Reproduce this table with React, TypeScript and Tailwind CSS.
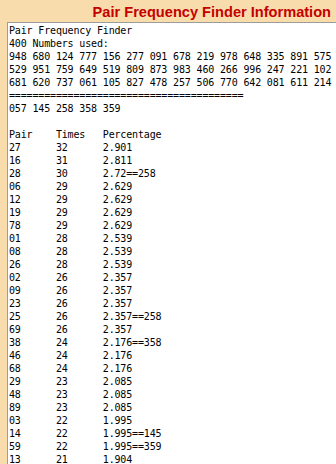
import React from 'react';

const rows: [string, string, string][] = [
  ['27', '32', '2.901'],
  ['16', '31', '2.811'],
  ['28', '30', '2.72==258'],
  ['06', '29', '2.629'],
  ['12', '29', '2.629'],
  ['19', '29', '2.629'],
  ['78', '29', '2.629'],
  ['01', '28', '2.539'],
  ['08', '28', '2.539'],
  ['26', '28', '2.539'],
  ['02', '26', '2.357'],
  ['09', '26', '2.357'],
  ['23', '26', '2.357'],
  ['25', '26', '2.357==258'],
  ['69', '26', '2.357'],
  ['38', '24', '2.176==358'],
  ['46', '24', '2.176'],
  ['68', '24', '2.176'],
  ['29', '23', '2.085'],
  ['48', '23', '2.085'],
  ['89', '23', '2.085'],
  ['03', '22', '1.995'],
  ['14', '22', '1.995==145'],
  ['59', '22', '1.995==359'],
  ['13', '21', '1.904'],
];

const pad = (s: string) => s.padEnd(8, ' ');

const text = [
  'Pair Frequency Finder',
  '400 Numbers used:',
  '948 680 124 777 156 277 091 678 219 978 648 335 891 575',
  '529 951 759 649 519 809 873 983 460 266 996 247 221 102',
  '681 620 737 061 105 827 478 257 506 770 642 081 611 214',
  '='.repeat(40),
  '057 145 258 358 359',
  '',
  pad('Pair') + pad('Times') + 'Percentage',
  ...rows.map(([p, t, pc]) => pad(p) + pad(t) + pc),
].join('\n');

export default function App() {
  return (
    <div className="w-[336px] h-[464px] overflow-hidden bg-[#f9dcab] flex flex-col">
      <div className="h-[22px] shrink-0 text-right pr-[5px]">
        <h1
          className="text-[14.6px] font-bold text-[#c40000] leading-[24px] whitespace-nowrap"
          style={{ fontFamily: '"Liberation Sans", Arial, sans-serif' }}
        >
          Pair Frequency Finder Information
        </h1>
      </div>
      <div className="flex-1 ml-[7px] bg-white border-l border-t border-[#9c9c9c] overflow-hidden">
        <pre
          className="m-0 pl-[1px] pt-[1px] text-[10px] leading-[13px] tracking-[-0.16px] text-black whitespace-pre"
          style={{ fontFamily: '"DejaVu Sans Mono", monospace' }}
        >
          {text}
        </pre>
      </div>
    </div>
  );
}
